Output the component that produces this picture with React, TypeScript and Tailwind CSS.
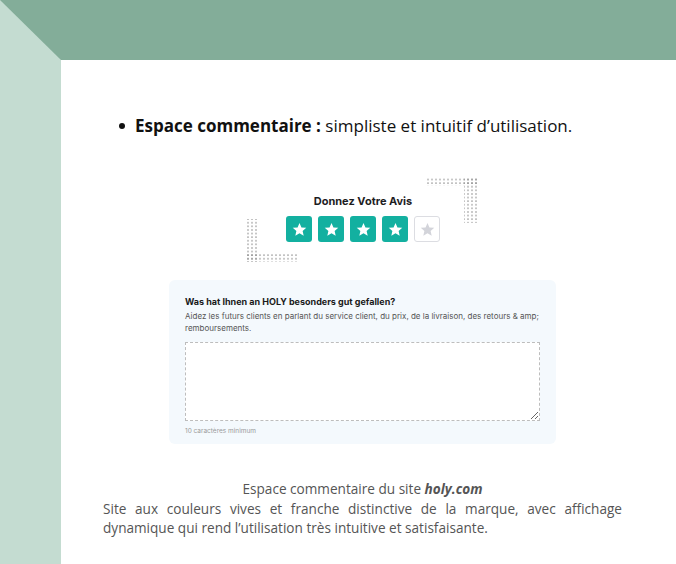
import React from 'react';

const Star = ({ filled }: { filled: boolean }) => (
  <div
    className={
      filled
        ? 'w-[26px] h-[26px] rounded-[3px] bg-[#13b0a0] flex items-center justify-center'
        : 'w-[26px] h-[26px] rounded-[3px] bg-white border border-[#dcdde2] flex items-center justify-center'
    }
  >
    <svg width="15" height="15" viewBox="0 0 24 24">
      <polygon
        points="12,1.5 15.1,8.6 22.8,9.3 17,14.4 18.7,22 12,18 5.3,22 7,14.4 1.2,9.3 8.9,8.6"
        fill={filled ? '#ffffff' : '#d3d4da'}
      />
    </svg>
  </div>
);

const Dots = () => (
  <svg className="absolute inset-0 pointer-events-none" width="232" height="90" viewBox="0 0 232 90">
    <defs>
      <pattern id="dots" width="4" height="3.6" patternUnits="userSpaceOnUse">
        <circle cx="1" cy="1" r="0.75" fill="#7c7c7c" />
      </pattern>
    </defs>
    {/* left corner */}
    <rect x="0" y="44" width="11" height="43" fill="url(#dots)" />
    <rect x="0" y="79" width="51" height="8" fill="url(#dots)" />
    {/* right corner */}
    <rect x="178" y="2" width="54" height="9" fill="url(#dots)" />
    <rect x="217" y="2" width="13" height="46" fill="url(#dots)" />
  </svg>
);

export default function App() {
  return (
    <div className="w-[676px] h-[564px] overflow-hidden grid grid-cols-[61px_1fr] grid-rows-[60px_1fr]">
      {/* top-left corner */}
      <div className="bg-[#c4dcd1]">
        <svg width="61" height="60" viewBox="0 0 61 60" className="block">
          <polygon points="0,0 61,0 61,60" fill="#83ad99" />
        </svg>
      </div>
      <div className="bg-[#83ad99]" />
      <div className="bg-[#c4dcd1]" />

      {/* content */}
      <div className="bg-white pl-[42px] pr-[54px]" style={{ fontFamily: '"Open Sans", sans-serif' }}>
        <ul className="mt-[54px] pl-[16px]">
          <li className="flex items-center text-[17px] leading-[24px] text-[#111]">
            <span className="w-[6px] h-[6px] rounded-full bg-[#111] mr-[10px] shrink-0" />
            <span>
              <b className="font-bold">Espace commentaire :</b> simpliste et intuitif d’utilisation.
            </span>
          </li>
        </ul>

        <div className="flex flex-col items-center" style={{ fontFamily: 'Inter, sans-serif' }}>
          <div className="relative w-[232px] h-[90px] mt-[37px] ml-[1px] flex flex-col items-center pt-[19px]">
            <Dots />
            <div className="text-[11px] leading-[14px] font-bold text-[#1d1d1f]">Donnez Votre Avis</div>
            <div className="flex gap-[6px] mt-2">
              <Star filled />
              <Star filled />
              <Star filled />
              <Star filled />
              <Star filled={false} />
            </div>
          </div>

          <div className="w-[387px] mt-[15px] rounded-[6px] bg-[#f4f9fd] px-[16px] pt-[16px] pb-[8px]">
            <div className="text-[9px] leading-[12px] font-bold text-[#1a1a1a]">
              Was hat Ihnen an HOLY besonders gut gefallen?
            </div>
            <div className="mt-[3px] text-[8px] leading-[11.5px] text-[#555]">
              Aidez les futurs clients en parlant du service client, du prix, de la livraison, des retours &amp; amp;
              remboursements.
            </div>
            <textarea
              className="block mt-[8px] w-full h-[79px] bg-white border border-dashed border-[#bdbdbd] outline-none"
              readOnly
            />
            <div className="mt-[6px] text-[6.5px] leading-[9px] text-[#9a9a9a]">10 caractères minimum</div>
          </div>
        </div>

        <div className="mt-[35px] text-[13.6px] leading-[19.5px] text-[#555]">
          <p className="text-center">
            Espace commentaire du site <b className="font-bold italic">holy.com</b>
          </p>
          <p className="text-justify">
            Site aux couleurs vives et franche distinctive de la marque, avec affichage dynamique qui rend
            l’utilisation très intuitive et satisfaisante.
          </p>
        </div>
      </div>
    </div>
  );
}
